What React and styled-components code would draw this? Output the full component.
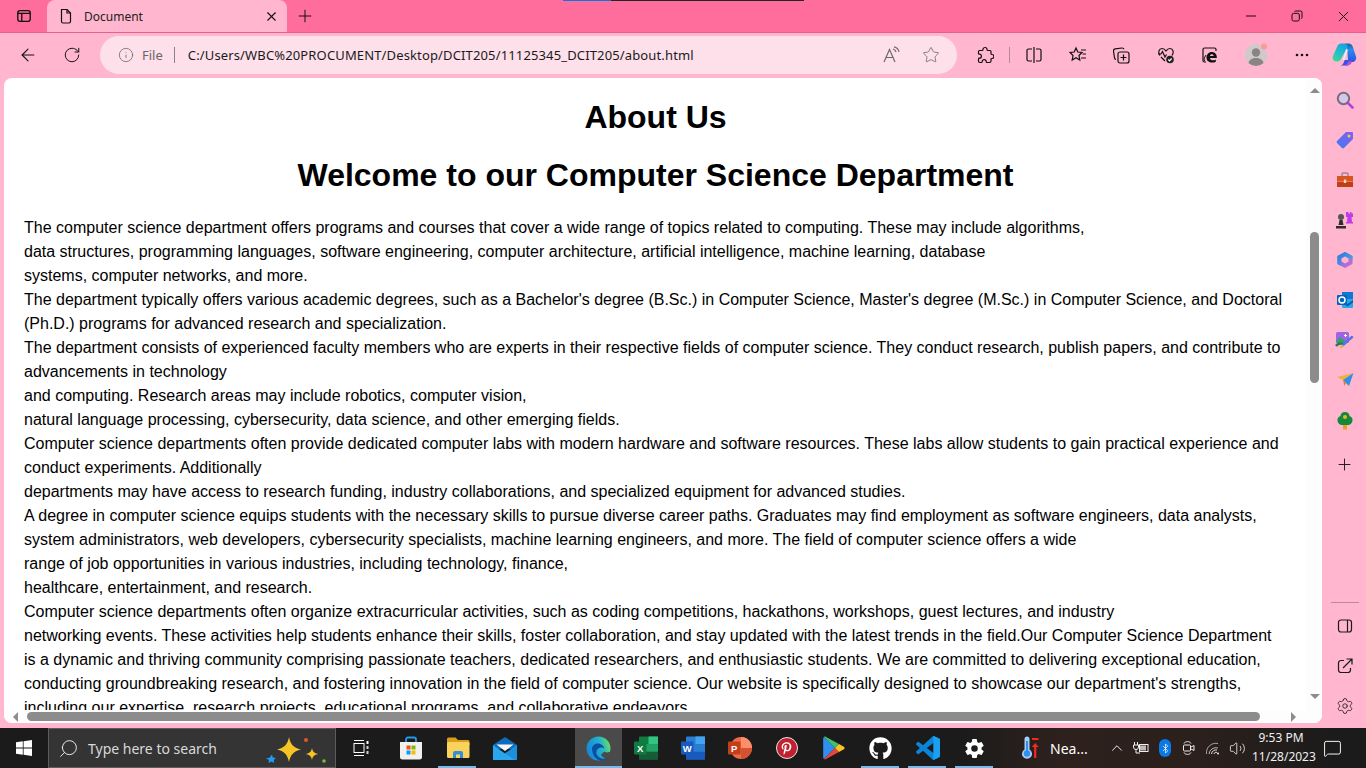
import React from 'react'
import styled, { createGlobalStyle } from 'styled-components'
import {
  ArrowLeft,
  Bluetooth,
  ChevronUp,
  Info,
  MessageSquare,
  Minus,
  Plus,
  RotateCw,
  Search,
  Settings,
  Star,
  Volume2,
  X,
} from 'lucide-react'
import { FaGithub, FaPinterestP } from 'react-icons/fa'
import { IoSettingsSharp } from 'react-icons/io5'

const UI_FONT = '"Noto Sans", "Open Sans", sans-serif'

const GlobalStyle = createGlobalStyle`
  html, body {
    margin: 0;
    height: 100%;
    overflow: hidden;
    background: #1c1c1c;
  }
  #root { height: 100%; }
`

const Shell = styled.div`
  width: 1366px;
  height: 768px;
  display: flex;
  flex-direction: column;
  overflow: hidden;
  font-family: ${UI_FONT};
  background: #ffb6ce;
`

// tab strip
const TabStrip = styled.div`
  position: relative;
  height: 32px;
  flex: none;
  display: flex;
  background: #ff6d9d;
  color: #111;
`
const Loading = styled.div`
  position: absolute;
  top: 0;
  left: 563px;
  width: 241px;
  height: 1px;
  background: linear-gradient(90deg, #0a78e0 48px, #242424 48px);
`
const StripBtn = styled.div`
  width: ${(p) => p.$w || 47}px;
  flex: none;
  display: flex;
  align-items: center;
  justify-content: center;
`
const Tab = styled.div`
  width: 240px;
  flex: none;
  display: flex;
  align-items: center;
  padding: 0 8px 0 10px;
  box-sizing: border-box;
  background: #ffb6ce;
  border-radius: 8px 8px 0 0;
`
const TabTitle = styled.span`
  flex: 1;
  margin-left: 9px;
  font-size: 12px;
  color: #222;
`
const WindowControls = styled.div`
  margin-left: auto;
  display: flex;
`

// toolbar
const Toolbar = styled.div`
  height: 46px;
  flex: none;
  display: flex;
  align-items: center;
  padding: 0 0 2px 6px;
  background: #ffb6ce;
  border-top: 1px solid #e0638c;
  box-sizing: border-box;
`
const ToolBtn = styled.div`
  width: 44px;
  flex: none;
  margin-left: ${(p) => p.$ml || 0}px;
  display: flex;
  align-items: center;
  justify-content: center;
  color: #111;
`
const Address = styled.div`
  width: 857px;
  height: 38px;
  flex: none;
  margin: 0 6px;
  padding: 0 17px 0 18px;
  box-sizing: border-box;
  display: flex;
  align-items: center;
  border-radius: 19px;
  background: #fde0ea;
`
const Scheme = styled.span`
  margin-left: 8px;
  font-size: 13px;
  color: #6a6468;
`
const AddressSep = styled.span`
  width: 1px;
  height: 16px;
  margin: 0 13px 0 11px;
  background: #8a8286;
`
const Url = styled.span`
  flex: 1;
  font-size: 13px;
  letter-spacing: 0.14px;
  color: #1a1a1a;
  white-space: nowrap;
`
const AddressIcon = styled.span`
  display: flex;
  margin-left: ${(p) => p.$gap || 0}px;
  color: #6e686c;
`
const ToolSep = styled.span`
  width: 1px;
  height: 16px;
  flex: none;
  margin: 0 2px;
  background: #b48a9a;
`

// page + side rail
const Middle = styled.div`
  flex: 1;
  min-height: 0;
  display: flex;
`
const Panel = styled.div`
  flex: 1;
  min-width: 0;
  margin: 0 1px 5px 4px;
  display: grid;
  grid-template-columns: 1fr 16px;
  grid-template-rows: 1fr 13px;
  background: #fff;
  border-radius: 8px;
  overflow: hidden;
`
const Viewport = styled.div`
  overflow: hidden;
  min-width: 0;
  min-height: 0;
  color: #000;
  font-family: "Liberation Sans", Arial, sans-serif;
`
const Heading = styled.h1`
  margin: 21px 0;
  padding-left: 1px;
  font-size: 32px;
  line-height: 37px;
  font-weight: 700;
  text-align: center;
`
const Body = styled.div`
  padding: 1px 0 0 20px;
  font-size: 16px;
  line-height: 24px;
  white-space: nowrap;
`
const VTrack = styled.div`
  display: flex;
  flex-direction: column;
  align-items: center;
  background: #fdfdfd;
  padding: 10px 0 0 1px;
  box-sizing: border-box;
`
const VThumb = styled.div`
  width: 9px;
  height: 151px;
  margin-top: 139px;
  border-radius: 5px;
  background: #8c8c8c;
`
const HTrack = styled.div`
  display: flex;
  align-items: center;
  padding-left: 9px;
  background: #fdfdfd;
`
const HThumb = styled.div`
  width: 1233px;
  height: 9px;
  margin: 0 31px 0 9px;
  border-radius: 5px;
  background: #8c8c8c;
`
const Corner = styled.div`
  background: #fdfdfd;
`
const Arrow = styled.span`
  width: 0;
  height: 0;
  flex: none;
  border-style: solid;
  border-color: transparent;
  ${(p) => p.$dir === 'up' && 'border-width: 0 5px 5px; border-bottom-color: #8c8c8c;'}
  ${(p) => p.$dir === 'down' && 'border-width: 5px 5px 0; border-top-color: #8c8c8c; margin-top: 311px;'}
  ${(p) => p.$dir === 'left' && 'border-width: 5px 5px 5px 0; border-right-color: #8c8c8c;'}
  ${(p) => p.$dir === 'right' && 'border-width: 5px 0 5px 5px; border-left-color: #8c8c8c;'}
`
const Rail = styled.div`
  width: 43px;
  flex: none;
  display: flex;
  flex-direction: column;
  align-items: center;
  padding: 2px 0;
  box-sizing: border-box;
  background: #ffb6ce;
  color: #1a1a1a;
`
const RailBtn = styled.div`
  width: 43px;
  height: 40px;
  flex: none;
  margin-top: ${(p) => p.$mt || 0}px;
  display: flex;
  align-items: center;
  justify-content: center;
`
const RailSep = styled.div`
  width: 28px;
  height: 1px;
  margin: auto 0 3px;
  background: #b58a9b;
`

// taskbar
const Taskbar = styled.div`
  height: 40px;
  flex: none;
  display: flex;
  align-items: stretch;
  background: linear-gradient(90deg, #1b1b1b 0, #1b1b1b 960px, #2e211d 1060px, #2b201c 1200px, #1b1b1b 1340px);
  color: #fff;
`
const StartBtn = styled.div`
  width: 48px;
  flex: none;
  display: flex;
  align-items: center;
  justify-content: center;
`
const SearchBox = styled.div`
  width: 288px;
  flex: none;
  display: flex;
  align-items: center;
  padding: 0 9px 0 9px;
  box-sizing: border-box;
  background: #343434;
  border: 1px solid #5c5c5c;
`
const SearchGlyph = styled.span`
  display: flex;
  transform: scaleX(-1);
  color: #eee;
`
const SearchText = styled.span`
  flex: 1;
  margin-left: 9px;
  font-size: 14px;
  color: #d9d9d9;
`
const Slots = styled.div`
  display: flex;
  padding-left: 4px;
`
const Slot = styled.div`
  position: relative;
  width: 47px;
  display: flex;
  align-items: center;
  justify-content: center;
  background: ${(p) => (p.$active ? '#4a4a4a' : 'transparent')};

  &::after {
    content: '';
    display: ${(p) => (p.$open ? 'block' : 'none')};
    position: absolute;
    bottom: 0;
    left: ${(p) => (p.$active ? 0 : 4)}px;
    right: ${(p) => (p.$active ? 0 : 5)}px;
    height: 2px;
    background: #76b9ed;
  }
`
const Weather = styled.div`
  width: 84px;
  flex: none;
  margin-left: 23px;
  display: flex;
  align-items: center;
  gap: 11px;
  font-size: 14px;
`
const Tray = styled.div`
  display: flex;
  align-items: center;
  color: #eee;
`
const TrayItem = styled.div`
  width: 24px;
  display: flex;
  align-items: center;
  justify-content: center;
`
const Clock = styled.div`
  width: 58px;
  margin-left: 3px;
  font-size: 12px;
  line-height: 19px;
  text-align: center;
  white-space: nowrap;
  color: #f0f0f0;
`
const Notify = styled.div`
  margin-left: 13px;
  display: flex;
  align-items: center;
`
const BtBadge = styled.span`
  width: 12px;
  height: 18px;
  display: flex;
  align-items: center;
  justify-content: center;
  border-radius: 6px;
  background: #0a78e6;
`
const PinBadge = styled.span`
  width: 20px;
  height: 20px;
  display: flex;
  align-items: center;
  justify-content: center;
  border-radius: 50%;
  background: #c0202f;
  border: 1px solid #e8e8e8;
  color: #fff;
`

// outline icons lucide does not have in the Edge form
const Line = ({ size = 18, children, sw = 1.2 }) => (
  <svg width={size} height={size} viewBox="0 0 18 18" fill="none" stroke="currentColor" strokeWidth={sw}>
    {children}
  </svg>
)
const TabsIcon = () => (
  <Line size={16}>
    <rect x="2" y="3" width="14" height="12" rx="2.500" strokeWidth="1.500" />
    <path d="M2 6h14M6.500 6v9" strokeWidth="1.500" />
  </Line>
)
const DocIcon = () => (
  <Line>
    <path d="M4.500 2.500h5.500l3.500 3.500v8.500a1.500 1.500 0 0 1-1.500 1.500h-6a1.500 1.500 0 0 1-1.500-1.500z" />
    <path d="M10 2.500v3.500h3.500" />
  </Line>
)
const RestoreIcon = () => (
  <Line size={12} sw={1.500}>
    <rect x="1.500" y="5" width="11" height="11.500" rx="2.500" />
    <path d="M5 2.500a2 2 0 0 1 1.500-1h8a2 2 0 0 1 2 2v8a2 2 0 0 1-1 1.600" />
  </Line>
)
const ReadAloud = () => (
  <Line>
    <path d="M2 16L7.500 3.500 13 16M4 11.500h7" />
    <path d="M11 3a4 4 0 0 1 3 3M12 .8a6.500 6.500 0 0 1 5 5" />
  </Line>
)
const PuzzleIcon = () => (
  <Line>
    <path d="M7 3.500a2 2 0 0 1 4 0c0 .6.400 1 1 1h2a1 1 0 0 1 1 1v2.200c0 .5.400.8.900.8a2 2 0 0 1 0 4c-.5 0-.9.300-.9.800V15a1.500 1.500 0 0 1-1.500 1.500H11c-.5 0-.8-.4-.8-.9a2 2 0 0 0-4 0c0 .5-.3.900-.8.900H4A1.500 1.500 0 0 1 2.500 15v-2c0-.5.400-.8.900-.8a2 2 0 0 0 0-4c-.5 0-.9-.3-.9-.8V5.500a1 1 0 0 1 1-1H6c.6 0 1-.4 1-1z" />
  </Line>
)
const SplitIcon = () => (
  <Line>
    <path d="M7 3H3.500A1.500 1.500 0 0 0 2 4.500v9A1.500 1.500 0 0 0 3.500 15H7M11 3h3.500A1.500 1.500 0 0 1 16 4.500v9a1.500 1.500 0 0 1-1.500 1.500H11M9 1v16" />
  </Line>
)
const FavListIcon = () => (
  <Line>
    <path d="M7 2l1.800 4 4.200.500-3 3 .800 4.500L7 11.800 3.200 14 4 9.500 1 6.500 5.200 6z" />
    <path d="M12 4h5M13.500 8H17M12 12h5" />
  </Line>
)
const CollectionsIcon = () => (
  <Line>
    <path d="M3 13.500A2 2 0 0 1 1.500 12L.5 5a2 2 0 0 1 1.700-2.200L9 2a2 2 0 0 1 2 1.200" />
    <rect x="5" y="6" width="11" height="11" rx="2" />
    <path d="M10.500 8.500v6M7.500 11.500h6" />
  </Line>
)
const HealthIcon = () => (
  <svg width="18" height="18" viewBox="0 0 18 18" fill="none" stroke="currentColor" strokeWidth="1.200">
    <path d="M3 9.500C.5 6.500 2 2.500 5 2.500c2 0 3 1 4 2.500 1-1.500 2-2.500 4-2.500 3 0 4.500 4 2 7" />
    <path d="M1 8h3l1.500-2.500L8 11l1.500-2.500" />
    <path d="M4 11l4 4" />
    <circle cx="13" cy="13.500" r="3.800" fill="#222" stroke="none" />
    <path d="M11.300 13.500l1.300 1.300 2-2.300" stroke="#fff" />
  </svg>
)
const IeModeIcon = () => (
  <svg width="18" height="18" viewBox="0 0 18 18" fill="none" stroke="currentColor" strokeWidth="1.200">
    <path d="M5 16H3.500A1.500 1.500 0 0 1 2 14.500v-11A1.500 1.500 0 0 1 3.500 2h10A1.500 1.500 0 0 1 15 3.500V5" />
    <path d="M5.500 11.800c0-3.400 2.200-5.800 5.300-5.800 3 0 5 2.200 5 5.200v.8H9c0 2.600 3.600 3 5.800 1.400v2.300c-3.600 1.800-9.300.8-9.300-3.900zM9 10h3.600c0-2.200-3.400-2.200-3.600 0z" fill="currentColor" stroke="none" />
    <path d="M4 15c-1.500-1-1-3 1-6" strokeWidth="1" />
  </svg>
)
const AvatarIcon = () => (
  <svg width="24" height="24" viewBox="0 0 24 24">
    <circle cx="12" cy="12" r="11" fill="#cfc9cb" />
    <circle cx="12" cy="9.500" r="4.200" fill="#8a8583" />
    <path d="M4.500 20c.8-3.500 3.500-5 7.500-5s6.700 1.500 7.500 5a11 11 0 0 1-15 0z" fill="#8a8583" />
    <circle cx="20" cy="3.500" r="3" fill="#f79b94" />
  </svg>
)
const DotsIcon = () => (
  <svg width="14" height="4" viewBox="0 0 14 4" fill="currentColor">
    <circle cx="2" cy="2" r="1.300" />
    <circle cx="7" cy="2" r="1.300" />
    <circle cx="12" cy="2" r="1.300" />
  </svg>
)
const CopilotIcon = () => (
  <svg width="25" height="23" viewBox="0 0 25 23">
    <defs>
      <linearGradient id="cpA" x1="0.700" y1="0" x2="0.200" y2="1">
        <stop offset="0" stopColor="#1c9fe0" />
        <stop offset="0.500" stopColor="#1fc0c8" />
        <stop offset="1" stopColor="#3cd890" />
      </linearGradient>
      <linearGradient id="cpB" x1="0.500" y1="0" x2="0.500" y2="1">
        <stop offset="0" stopColor="#0c6aa0" />
        <stop offset="0.350" stopColor="#2a8cf0" />
        <stop offset="1" stopColor="#2f50e0" />
      </linearGradient>
    </defs>
    <path d="M13 .5h3.500c2 0 3.500 1 4.200 3l3.300 10c.8 2.800-.8 5.500-3.800 5.500h-4l-1-13c-.2-2.500-.8-4.500-2.200-5.500z" fill="url(#cpB)" />
    <path d="M9 .5h4c2 0 2.500 2 2.300 4L9.500 15c-.8 2-2 3.500-4.500 3.500-3.400 0-5-2.500-4-5.500L5 4c.8-2.300 2-3.500 4-3.500z" fill="url(#cpA)" />
    <path d="M15 6.500L11.500 17" stroke="#e8f6ff" strokeWidth="2" opacity=".85" />
    <path d="M8 22.500c2 0 3-1.200 3.700-3l1-2.500H20c-.8 3-2.500 5.500-5.500 5.500z" fill="#3a4ee0" />
    <path d="M15 22.500c2.500-.2 4.300-1.500 5-4l-3-.5-3.500 4.500z" fill="#b050e0" />
  </svg>
)

// side rail icons
const RailSearch = () => (
  <svg width="18" height="18" viewBox="0 0 18 18">
    <circle cx="7.500" cy="7.500" r="5.700" fill="#d7c6e8" stroke="#74707c" strokeWidth="2" />
    <path d="M11.800 11.800l4.700 4.700" stroke="#b03fd8" strokeWidth="2.500" strokeLinecap="round" />
  </svg>
)
const RailTag = () => (
  <svg width="18" height="18" viewBox="0 0 18 18">
    <defs>
      <linearGradient id="tagG" x1="0" y1="1" x2="1" y2="0">
        <stop offset="0" stopColor="#3d7cf0" />
        <stop offset="1" stopColor="#8a5cf0" />
      </linearGradient>
    </defs>
    <path d="M10 1h6a1 1 0 0 1 1 1v6L8 17a1.500 1.500 0 0 1-2 0l-5-5a1.500 1.500 0 0 1 0-2z" fill="url(#tagG)" />
    <circle cx="13" cy="5" r="1.500" fill="#f4d04a" />
  </svg>
)
const RailToolbox = () => (
  <svg width="18" height="16" viewBox="0 0 18 16">
    <path d="M6 4V2a1 1 0 0 1 1-1h4a1 1 0 0 1 1 1v2" fill="none" stroke="#a08a80" strokeWidth="1.500" />
    <rect x="1" y="4" width="16" height="5" fill="#d9541e" />
    <rect x="1" y="9.500" width="16" height="5.500" fill="#bf3f12" />
    <rect x="7.800" y="7.500" width="2.400" height="3.500" fill="#e8dcd0" />
  </svg>
)
const RailChess = () => (
  <svg width="19" height="18" viewBox="0 0 19 18">
    <path d="M12 1h1.500v1.500H15V1h1.500v1.500H18V1v5h-1.500l.5 5h1v1.500h-7V11h1l.5-5H11V1z" fill="#c23be8" />
    <circle cx="6" cy="6" r="3" fill="#555" />
    <path d="M4.500 9h3l1 5h-5zM1 15h10v2.500H1z" fill="#2d2d2d" />
  </svg>
)
const RailM365 = () => (
  <svg width="18" height="18" viewBox="0 0 18 18">
    <defs>
      <linearGradient id="m3A" x1="0" y1="0" x2="1" y2="1">
        <stop offset="0" stopColor="#2f6fe0" />
        <stop offset="1" stopColor="#3cc0d8" />
      </linearGradient>
      <linearGradient id="m3B" x1="0" y1="0" x2="1" y2="1">
        <stop offset="0" stopColor="#7a60e0" />
        <stop offset="1" stopColor="#d070d8" />
      </linearGradient>
    </defs>
    <path d="M9 1l7.500 4v8L9 17l-7.500-4V5z" fill="url(#m3B)" />
    <path d="M9 1l7.500 4v4L9 5 5 7.500V15l-3.500-2V5z" fill="url(#m3A)" />
    <path d="M5.500 7.500L9 5.500l3.500 2v3L9 12.500l-3.500-2z" fill="#ffb6ce" />
  </svg>
)
const RailOutlook = () => (
  <svg width="18" height="18" viewBox="0 0 18 18">
    <rect x="6" y="1" width="11" height="8" fill="#0f78d4" />
    <path d="M6 8h11v8a1 1 0 0 1-1 1H7a1 1 0 0 1-1-1z" fill="#28a8ea" />
    <path d="M6 9l5.500 4L17 9v2.500l-5.500 4-5.500-4z" fill="#0a5ea8" />
    <rect x="1" y="4" width="10" height="10" rx="1" fill="#0364b8" />
    <circle cx="6" cy="9" r="3" fill="none" stroke="#fff" strokeWidth="1.500" />
  </svg>
)
const RailDesigner = () => (
  <svg width="19" height="18" viewBox="0 0 19 18">
    <rect x="1" y="1" width="13" height="11" rx="1.500" fill="#9f63e6" />
    <path d="M1 11l4-5 4 3 4 3H2z" fill="#2fa36b" />
    <path d="M1 15c2-3 5-3 8-2" stroke="#2c7a50" strokeWidth="2.500" fill="none" />
    <path d="M8 14L17 6" stroke="#5a70e8" strokeWidth="2.500" strokeLinecap="round" />
    <path d="M5 15.500c1 .8 2.500.5 3-1" stroke="#e8b040" strokeWidth="2" fill="none" />
    <path d="M10.500 3v3M9 4.500h3" stroke="#fff" strokeWidth="1" />
  </svg>
)
const RailPlane = () => (
  <svg width="18" height="16" viewBox="0 0 18 16">
    <path d="M1 5L17.500 1 7 8z" fill="#f0b030" />
    <path d="M17.500 1L7 8l6 6z" fill="#2f8fe8" />
    <path d="M7 8l1.500 6 1.500-3.500z" fill="#e07a20" />
  </svg>
)
const RailTree = () => (
  <svg width="16" height="19" viewBox="0 0 16 19">
    <rect x="6" y="13" width="4" height="5.500" fill="#eba020" />
    <path d="M8 1c3 0 4.500 2 4.500 4 2.300.5 3 2.500 3 4 0 2.700-2 5-4.500 5H5c-2.500 0-4.500-2.300-4.500-5 0-1.500.7-3.500 3-4C3.500 3 5 1 8 1z" fill="#128a3c" />
    <circle cx="8" cy="6" r="2" fill="#f0b428" />
  </svg>
)
const RailPanel = () => (
  <Line>
    <rect x="2.500" y="3" width="13" height="12" rx="2.500" />
    <path d="M11.500 3v12" />
  </Line>
)
const RailExternal = () => (
  <Line>
    <path d="M8 3.500H5A2.500 2.500 0 0 0 2.500 6v7A2.500 2.500 0 0 0 5 15.500h7a2.500 2.500 0 0 0 2.500-2.500v-2" />
    <path d="M7 11l9-9M10.500 2H16v5.500" />
  </Line>
)

// taskbar icons
const WinLogo = () => (
  <svg width="16" height="16" viewBox="0 0 16 16" fill="#fff">
    <path d="M0 2.300L6.800 1.300V7.600H0zM7.600 1.200L16 0V7.600H7.600zM0 8.400H6.800V14.700L0 13.700zM7.600 8.400H16V16L7.600 14.800z" />
  </svg>
)
const SparkleIcon = () => (
  <svg width="60" height="30" viewBox="0 -3 60 30">
    <path d="M23 1c1.500 7 4 10.500 12 12.500-8 2-10.500 5.500-12 12.500-1.500-7-4-10.500-12-12.500 8-2 10.500-5.500 12-12.500z" fill="#f7c325" />
    <path d="M46 12c.7 3.500 2 5 6 6-4 1-5.300 2.500-6 6-.7-3.500-2-5-6-6 4-1 5.300-2.500 6-6z" fill="#f7c325" />
    <path d="M6 18.500l.8 3 3.200.5-2.200 2 .4 3-2.700-1.500L2.500 27l.5-3-3-1.800 3.500-.5z" fill="#1f9cf0" />
    <circle cx="40" cy="4" r="2" fill="#e0582a" />
    <circle cx="58" cy="25" r="1.800" fill="#7fb83a" />
  </svg>
)
const TaskView = () => (
  <svg width="22" height="16" viewBox="0 0 22 16" fill="none" stroke="#fff" strokeWidth="1">
    <path d="M1 .5h10M1 15.500h10" />
    <rect x="1" y="3.500" width="10" height="9" />
    <path d="M14.500 1v3" strokeWidth="2" />
    <path d="M14.500 6v3M14.500 11v3" strokeWidth="2" opacity=".8" />
  </svg>
)
const StoreIcon = () => (
  <svg width="24" height="24" viewBox="0 0 24 24">
    <path d="M7 6V3.500A2 2 0 0 1 9 1.500h6a2 2 0 0 1 2 2V6" fill="none" stroke="#1f9cf0" strokeWidth="1.800" />
    <path d="M1 6h22v15a2.500 2.500 0 0 1-2.500 2.500h-17A2.500 2.500 0 0 1 1 21z" fill="#f2f0ee" />
    <rect x="7.500" y="9.500" width="4" height="4" fill="#f0502a" />
    <rect x="12.500" y="9.500" width="4" height="4" fill="#7fba00" />
    <rect x="7.500" y="14.500" width="4" height="4" fill="#00a4ef" />
    <rect x="12.500" y="14.500" width="4" height="4" fill="#ffb900" />
  </svg>
)
const ExplorerIcon = () => (
  <svg width="24" height="22" viewBox="0 0 24 22">
    <path d="M1 2a1.500 1.500 0 0 1 1.500-1.500h7L12 3h10a1.500 1.500 0 0 1 1.500 1.500V8H1z" fill="#d9a017" />
    <rect x="1" y="5" width="22.500" height="16" rx="1.500" fill="#fbd35c" />
    <path d="M7 21v-5a2 2 0 0 1 2-2h6a2 2 0 0 1 2 2v5h-3v-3.500h-4V21z" fill="#2f8fd8" />
  </svg>
)
const MailIcon = () => (
  <svg width="24" height="23" viewBox="0 0 24 23">
    <path d="M0 8L12 0l12 8v4H0z" fill="#0f6cbd" />
    <path d="M3.500 7.500h17L12 14z" fill="#f6f8fb" />
    <path d="M0 8l12 8.500L24 8v15H0z" fill="#2aa6ec" />
    <path d="M12 16.500L24 8v15h-2z" fill="#1b8fdc" />
  </svg>
)
const EdgeIcon = () => (
  <svg width="25" height="25" viewBox="0 0 25 25">
    <defs>
      <linearGradient id="egA" x1="0" y1="0.600" x2="1" y2="0.300">
        <stop offset="0" stopColor="#1784d8" />
        <stop offset="0.600" stopColor="#22b0d0" />
        <stop offset="1" stopColor="#6ae060" />
      </linearGradient>
    </defs>
    <circle cx="12.500" cy="12.500" r="12" fill="url(#egA)" />
    <path d="M25 15c-2.500 2-5 1.500-6.500.5-1.500 1.500-3.500 2.500-3.500 3.500 2 3 5 4 7 3l3 3z" fill="#4a4a4a" />
    <path d="M6 12c0 7 4 13 10 12.500 2.500-.2 4.500-1 6-2.500-4 1.500-9 .5-11-3-1.800-3 0-7 4-7.500 2-.2 3 .5 3.500 1.500C18 9 13.500 7 10.500 7.500 8 8 6.500 10 6 12z" fill="#0a4fa0" />
  </svg>
)
const OfficeDoc = ({ base, mid, light, dark, badge, letter }) => (
  <svg width="24" height="24" viewBox="0 0 24 24">
    <rect x="5" y="0.500" width="19" height="23" rx="1" fill={base} />
    <rect x="14.500" y="0.500" width="9.500" height="7.600" fill={light} />
    <rect x="5" y="8.100" width="19" height="7.700" fill={mid} />
    <rect x="5" y="15.800" width="19" height="7.700" fill={dark} />
    <rect x="0" y="5.500" width="12.500" height="13" rx="1" fill={badge} />
    <text x="6.200" y="15.500" textAnchor="middle" fontSize="9.500" fontWeight="700" fontFamily="Liberation Sans, sans-serif" fill="#fff">
      {letter}
    </text>
  </svg>
)
const PptIcon = () => (
  <svg width="24" height="24" viewBox="0 0 24 24">
    <circle cx="13" cy="12" r="11" fill="#ed6c47" />
    <path d="M13 1a11 11 0 0 1 11 11H13z" fill="#ff8f6b" />
    <path d="M13 12h11a11 11 0 0 1-11 11z" fill="#d35230" />
    <rect x="0" y="5.500" width="12.500" height="13" rx="1" fill="#c43e1c" />
    <text x="6.200" y="15.500" textAnchor="middle" fontSize="9.500" fontWeight="700" fontFamily="Liberation Sans, sans-serif" fill="#fff">
      P
    </text>
  </svg>
)
const PlayIcon = () => (
  <svg width="22" height="24" viewBox="0 0 22 24">
    <path d="M1 1l11 11L1 23c-.5-.4-.8-1-.8-1.700V2.700C.2 2 .5 1.400 1 1z" fill="#2f8ff0" />
    <path d="M1 1c.6-.5 1.400-.5 2.100-.1L16 8l-4 4z" fill="#3fbf6a" />
    <path d="M1 23c.6.5 1.400.5 2.100.1L16 16l-4-4z" fill="#e8453c" />
    <path d="M16 8l4.800 2.700c1 .6 1 2 0 2.600L16 16l-4-4z" fill="#f7c325" />
  </svg>
)
const VsCodeIcon = () => (
  <svg width="24" height="24" viewBox="0 0 24 24">
    <path d="M23.150 2.587L18.210.21a1.494 1.494 0 0 0-1.705.29l-9.460 8.630-4.120-3.128a.999.999 0 0 0-1.276.057L.327 7.261A1 1 0 0 0 .326 8.740L3.899 12 .326 15.260a1 1 0 0 0 .001 1.479L1.650 17.940a.999.999 0 0 0 1.276.057l4.120-3.128 9.460 8.630a1.492 1.492 0 0 0 1.704.29l4.942-2.377A1.500 1.500 0 0 0 24 20.060V3.939a1.500 1.500 0 0 0-.85-1.352zm-5.146 14.861L10.826 12l7.178-5.448v10.896z" fill="#0a84d6" />
    <path d="M17.300 23.900a1.500 1.500 0 0 0 .6-.150l4.942-2.377A1.500 1.500 0 0 0 24 20.060V3.939a1.500 1.500 0 0 0-.85-1.352L18.210.21a1.500 1.500 0 0 0-.9-.140z" fill="#1c9ff0" />
  </svg>
)
const ThermoIcon = () => (
  <svg width="18" height="24" viewBox="0 0 18 24">
    <path d="M3.500 3a2.500 2.500 0 0 1 5 0v10.500a5 5 0 1 1-5 0z" fill="#a8cdf5" />
    <circle cx="6" cy="17.500" r="3.200" fill="#2f8ff0" />
    <rect x="5" y="5" width="2" height="12" fill="#2f8ff0" />
    <path d="M11 2h6.500v2H11z" fill="#f02a1e" />
    <path d="M14.200 7l3.500 4h-2.400v11h-2.200V11h-2.400z" fill="#f02a1e" />
  </svg>
)
const PlugIcon = () => (
  <svg width="16" height="14" viewBox="0 0 16 14" fill="none" stroke="#eee" strokeWidth="1">
    <path d="M1.500 1v3M4.500 1v3M.5 4h5v2a2.500 2.500 0 0 1-5 0zM3 8.500V12h4" />
    <rect x="6.500" y="3.500" width="8.500" height="7" fill="none" />
    <rect x="7" y="4.500" width="6" height="5" fill="#eee" stroke="none" opacity=".75" />
  </svg>
)
const CamIcon = () => (
  <svg width="12" height="16" viewBox="0 0 12 16" fill="none" stroke="#eee" strokeWidth="1">
    <path d="M1 3.500C2 1 7 1 8 3.500M1 12.500c1 2.500 6 2.500 7 0" />
    <rect x=".5" y="5" width="7" height="6" rx="1" />
    <path d="M8 7l3-1.500v5L8 9" />
  </svg>
)
const WifiIcon = () => (
  <svg width="14" height="14" viewBox="0 0 14 14" fill="none" stroke="#ddd" strokeWidth="1">
    <path d="M.5 13A9.500 9.500 0 0 1 12 2.500" opacity=".7" />
    <path d="M3 13a7 7 0 0 1 9-6" opacity=".8" />
    <path d="M5.500 13A4.500 4.500 0 0 1 11 9" />
    <path d="M8 13a2 2 0 0 1 3-1.500" />
    <circle cx="12" cy="12.500" r="1" fill="#eee" stroke="none" />
  </svg>
)

const lines = [
  'The computer science department offers programs and courses that cover a wide range of topics related to computing. These may include algorithms,',
  'data structures, programming languages, software engineering, computer architecture, artificial intelligence, machine learning, database',
  'systems, computer networks, and more.',
  "The department typically offers various academic degrees, such as a Bachelor's degree (B.Sc.) in Computer Science, Master's degree (M.Sc.) in Computer Science, and Doctoral",
  '(Ph.D.) programs for advanced research and specialization.',
  'The department consists of experienced faculty members who are experts in their respective fields of computer science. They conduct research, publish papers, and contribute to',
  'advancements in technology',
  'and computing. Research areas may include robotics, computer vision,',
  'natural language processing, cybersecurity, data science, and other emerging fields.',
  'Computer science departments often provide dedicated computer labs with modern hardware and software resources. These labs allow students to gain practical experience and',
  'conduct experiments. Additionally',
  'departments may have access to research funding, industry collaborations, and specialized equipment for advanced studies.',
  'A degree in computer science equips students with the necessary skills to pursue diverse career paths. Graduates may find employment as software engineers, data analysts,',
  'system administrators, web developers, cybersecurity specialists, machine learning engineers, and more. The field of computer science offers a wide',
  'range of job opportunities in various industries, including technology, finance,',
  'healthcare, entertainment, and research.',
  'Computer science departments often organize extracurricular activities, such as coding competitions, hackathons, workshops, guest lectures, and industry',
  'networking events. These activities help students enhance their skills, foster collaboration, and stay updated with the latest trends in the field.Our Computer Science Department',
  'is a dynamic and thriving community comprising passionate teachers, dedicated researchers, and enthusiastic students. We are committed to delivering exceptional education,',
  "conducting groundbreaking research, and fostering innovation in the field of computer science. Our website is specifically designed to showcase our department's strengths,",
  'including our expertise, research projects, educational programs, and collaborative endeavors.',
]

const App = () => {
  return (
    <>
      <GlobalStyle />
      <Shell>
        <TabStrip>
          <Loading />
          <StripBtn><TabsIcon /></StripBtn>
          <Tab>
            <DocIcon />
            <TabTitle>Document</TabTitle>
            <X size={15} strokeWidth={1.700} />
          </Tab>
          <StripBtn $w={35}><Plus size={20} strokeWidth={1.200} /></StripBtn>
          <WindowControls>
            <StripBtn $w={46}><Minus size={16} strokeWidth={1.500} /></StripBtn>
            <StripBtn $w={46}><RestoreIcon /></StripBtn>
            <StripBtn $w={46}><X size={17} strokeWidth={1.400} /></StripBtn>
          </WindowControls>
        </TabStrip>

        <Toolbar>
          <ToolBtn><ArrowLeft size={20} strokeWidth={1.300} /></ToolBtn>
          <ToolBtn><RotateCw size={18} strokeWidth={1.300} /></ToolBtn>
          <Address>
            <AddressIcon><Info size={16} strokeWidth={1.200} /></AddressIcon>
            <Scheme>File</Scheme>
            <AddressSep />
            <Url>C:/Users/WBC%20PROCUMENT/Desktop/DCIT205/11125345_DCIT205/about.html</Url>
            <AddressIcon><ReadAloud /></AddressIcon>
            <AddressIcon $gap={22}><Star size={18} strokeWidth={1.100} /></AddressIcon>
          </Address>
          <ToolBtn><PuzzleIcon /></ToolBtn>
          <ToolSep />
          <ToolBtn><SplitIcon /></ToolBtn>
          <ToolBtn><FavListIcon /></ToolBtn>
          <ToolBtn><CollectionsIcon /></ToolBtn>
          <ToolBtn><HealthIcon /></ToolBtn>
          <ToolBtn><IeModeIcon /></ToolBtn>
          <ToolBtn $ml={2}><AvatarIcon /></ToolBtn>
          <ToolBtn $ml={2}><DotsIcon /></ToolBtn>
          <ToolBtn $ml={-2}><CopilotIcon /></ToolBtn>
        </Toolbar>

        <Middle>
          <Panel>
            <Viewport>
              <Heading>About Us</Heading>
              <Heading>Welcome to our Computer Science Department</Heading>
              <Body>
                {lines.map((text) => (
                  <div key={text}>{text}</div>
                ))}
              </Body>
            </Viewport>
            <VTrack>
              <Arrow $dir="up" />
              <VThumb />
              <Arrow $dir="down" />
            </VTrack>
            <HTrack>
              <Arrow $dir="left" />
              <HThumb />
              <Arrow $dir="right" />
            </HTrack>
            <Corner />
          </Panel>
          <Rail>
            <RailBtn><RailSearch /></RailBtn>
            <RailBtn><RailTag /></RailBtn>
            <RailBtn><RailToolbox /></RailBtn>
            <RailBtn><RailChess /></RailBtn>
            <RailBtn><RailM365 /></RailBtn>
            <RailBtn><RailOutlook /></RailBtn>
            <RailBtn><RailDesigner /></RailBtn>
            <RailBtn><RailPlane /></RailBtn>
            <RailBtn><RailTree /></RailBtn>
            <RailBtn $mt={4}><Plus size={19} strokeWidth={1.200} /></RailBtn>
            <RailSep />
            <RailBtn><RailPanel /></RailBtn>
            <RailBtn><RailExternal /></RailBtn>
            <RailBtn><Settings size={18} strokeWidth={1.100} /></RailBtn>
          </Rail>
        </Middle>

        <Taskbar>
          <StartBtn><WinLogo /></StartBtn>
          <SearchBox>
            <SearchGlyph><Search size={21} strokeWidth={1.100} /></SearchGlyph>
            <SearchText>Type here to search</SearchText>
            <SparkleIcon />
          </SearchBox>
          <Slots>
            <Slot><TaskView /></Slot>
            <Slot><StoreIcon /></Slot>
            <Slot $open><ExplorerIcon /></Slot>
            <Slot><MailIcon /></Slot>
            <Slot />
            <Slot $active $open><EdgeIcon /></Slot>
            <Slot><OfficeDoc base="#107c41" light="#33c481" mid="#21a366" dark="#185c37" badge="#0f7b40" letter="X" /></Slot>
            <Slot><OfficeDoc base="#2b7cd3" light="#41a5ee" mid="#2b7cd3" dark="#185abd" badge="#185abd" letter="W" /></Slot>
            <Slot><PptIcon /></Slot>
            <Slot><PinBadge><FaPinterestP size={13} /></PinBadge></Slot>
            <Slot><PlayIcon /></Slot>
            <Slot $open><FaGithub size={23} /></Slot>
            <Slot $open><VsCodeIcon /></Slot>
            <Slot $open><IoSettingsSharp size={21} /></Slot>
          </Slots>
          <Weather>
            <ThermoIcon />
            <span>Nea...</span>
          </Weather>
          <Tray>
            <TrayItem><ChevronUp size={18} strokeWidth={1.300} /></TrayItem>
            <TrayItem><PlugIcon /></TrayItem>
            <TrayItem><BtBadge><Bluetooth size={11} color="#fff" strokeWidth={1.600} /></BtBadge></TrayItem>
            <TrayItem><CamIcon /></TrayItem>
            <TrayItem><WifiIcon /></TrayItem>
            <TrayItem><Volume2 size={17} strokeWidth={1.200} /></TrayItem>
          </Tray>
          <Clock>
            <div>9:53 PM</div>
            <div>11/28/2023</div>
          </Clock>
          <Notify><MessageSquare size={19} strokeWidth={1.200} /></Notify>
        </Taskbar>
      </Shell>
    </>
  )
}

export default App
